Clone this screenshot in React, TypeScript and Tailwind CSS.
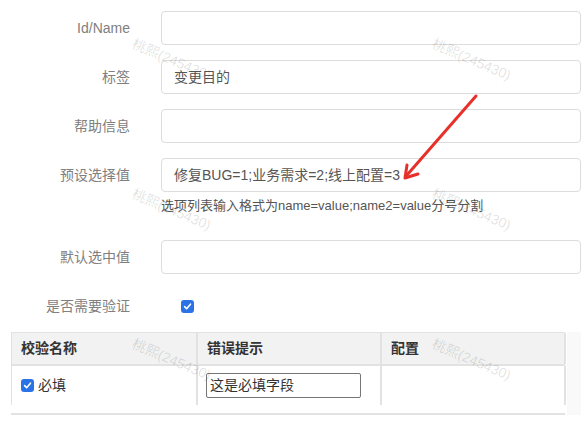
import React from "react";

const font = { fontFamily: '"Liberation Sans", "Noto Sans CJK SC", sans-serif' };

function Row({ label, value, children }: { label: string; value?: string; children?: React.ReactNode }) {
  return (
    <div className="flex items-center">
      <div className="w-[130px] shrink-0 text-right text-[14px] text-[#808080]">{label}</div>
      <div className="ml-[31px] flex h-[34px] w-[420px] items-center rounded-[4px] border border-[#dcdcdc] bg-white pl-[12px] text-[14px] text-[#555]">
        {value}
      </div>
      {children}
    </div>
  );
}

function Check({ className = "" }: { className?: string }) {
  return (
    <div className={`flex h-[13px] w-[13px] items-center justify-center rounded-[3px] bg-[#2a72e6] ${className}`}>
      <svg width="9" height="9" viewBox="0 0 10 10">
        <path d="M1.8 5.2 L4 7.4 L8.3 2.4" fill="none" stroke="white" strokeWidth="1.8" strokeLinecap="round" strokeLinejoin="round" />
      </svg>
    </div>
  );
}

const marks = [
  [133, 43],
  [433, 43],
  [133, 193],
  [433, 193],
  [133, 343],
  [433, 343],
];

export default function App() {
  return (
    <div className="relative h-[429px] w-[581px] overflow-hidden bg-white" style={font}>
      <div className="pt-[11px]">
        <div className="flex flex-col gap-[15px]">
          <Row label="Id/Name" />
          <Row label="标签" value="变更目的" />
          <Row label="帮助信息" />
          <div>
            <Row label="预设选择值" value="修复BUG=1;业务需求=2;线上配置=3" />
            <div className="ml-[161px] mt-[4px] h-[20px] text-[13px] leading-[20px] text-[#555]">
              选项列表输入格式为name=value;name2=value分号分割
            </div>
          </div>
        </div>
        <div className="mt-[24px]">
          <Row label="默认选中值" />
        </div>
        <div className="mt-[22px] flex h-[20px] items-center">
          <div className="w-[130px] text-right text-[14px] text-[#808080]">是否需要验证</div>
          <Check className="ml-[51px]" />
        </div>
        <div className="mt-[16px] flex">
          <div className="ml-[11px] w-[554px] border-b-2 border-[#e2e2e2]">
            <div className="grid h-[32px] grid-cols-[186px_184px_184px] border-t border-l border-[#e2e2e2] bg-[#f2f2f2] text-[14px] font-bold text-[#333]">
              <div className="flex items-center border-r-2 border-[#e2e2e2] pl-[9px]">校验名称</div>
              <div className="flex items-center border-r-2 border-[#e2e2e2] pl-[9px]">错误提示</div>
              <div className="flex items-center border-r-2 border-[#e2e2e2] pl-[9px]">配置</div>
            </div>
            <div className="grid h-[41px] grid-cols-[186px_184px_184px] border-t-2 border-l border-[#e2e2e2] text-[14px] text-[#333]">
              <div className="flex items-center border-r-2 border-[#e2e2e2] pl-[9px]">
                <Check />
                <span className="ml-[4px]">必填</span>
              </div>
              <div className="flex items-center border-r-2 border-[#e2e2e2] pl-[8px]">
                <div className="flex h-[25px] w-[155px] items-center rounded-[2px] border border-[#767676] pl-[3px]">这是必填字段</div>
              </div>
              <div className="border-r-2 border-[#e2e2e2]"></div>
            </div>
          </div>
          <div className="ml-[2px] h-[83px] flex-1 bg-[#f9f9f9]"></div>
        </div>
      </div>

      <svg className="pointer-events-none absolute left-0 top-0" width="581" height="429">
        <line x1="476" y1="96" x2="407" y2="175" stroke="#e8302a" strokeWidth="3" strokeLinecap="round" />
        <path d="M407 165 L405 178 L418 174" fill="none" stroke="#e8302a" strokeWidth="3" strokeLinecap="round" strokeLinejoin="round" />
      </svg>

      {marks.map(([x, y], i) => (
        <span
          key={i}
          className="pointer-events-none absolute origin-left whitespace-nowrap text-[14px] leading-[14px] text-[rgba(0,0,0,0.12)]"
          style={{ left: x, top: y - 7, transform: "rotate(23deg)" }}
        >
          桃熙(245430)
        </span>
      ))}
    </div>
  );
}
